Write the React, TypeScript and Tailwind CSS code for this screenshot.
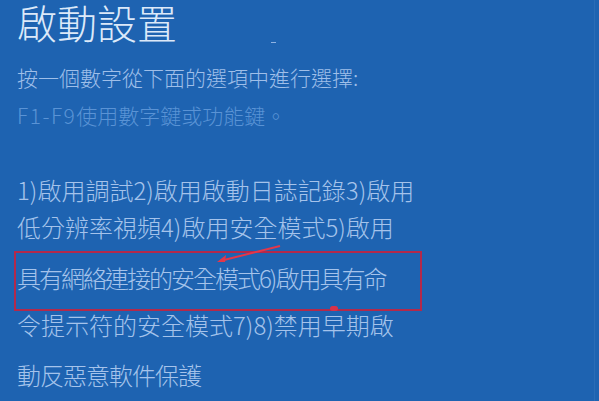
import React from "react";

const font = { fontFamily: '"Noto Sans CJK TC", "Noto Sans", sans-serif' };

const lines = [
  { text: "1)啟用調試2)啟用啟動日誌記錄3)啟用", cls: "h-[37px] tracking-[0px]" },
  { text: "低分辨率視頻4)啟用安全模式5)啟用", cls: "h-[51px] tracking-[0px]" },
  { text: "具有網絡連接的安全模式6)啟用具有命", cls: "h-[47px] tracking-[-2px]" },
  { text: "令提示符的安全模式7)8)禁用早期啟", cls: "h-[50px] tracking-[0px]" },
  { text: "動反惡意軟件保護", cls: "h-[40px] tracking-[-1px]" },
];

export default function App() {
  return (
    <div
      className="relative w-[599px] h-[401px] overflow-hidden bg-[#1e63b1] text-[#a9c6ec]"
      style={font}
    >
      <div className="flex flex-col px-[17px]">
        <div className="h-[44px] text-[40px] leading-[44px] font-light text-[#dce9f9]">
          啟動設置
        </div>
        <div className="mt-[20px] h-[26px] text-[21px] leading-[26px] font-light text-[#9fbfe9]">
          按一個數字從下面的選項中進行選擇:
        </div>
        <div className="mt-[12px] h-[26px] text-[21px] leading-[26px] font-light text-[#5a93d5]">
          <span className="tracking-[1.5px]">F1-F9</span>使用數字鍵或功能鍵。
        </div>
        <div className="mt-[47px] flex flex-col">
          {lines.map((l) => (
            <div
              key={l.text}
              className={`${l.cls} text-[24px] leading-[30px] font-light text-[#a5c3eb]`}
            >
              {l.text}
            </div>
          ))}
        </div>
      </div>

      {/* annotation box */}
      <div className="absolute left-[14px] top-[251px] w-[408px] h-[60px] border-2 border-[#b3294b]" />
      <div className="absolute left-[330px] top-[306px] w-[8px] h-[5px] rounded-full bg-[#d8324a]" />
      <svg
        className="absolute left-[210px] top-[240px]"
        width="80"
        height="30"
        viewBox="0 0 80 30"
      >
        <line x1="70" y1="6" x2="10" y2="21" stroke="#e3374a" strokeWidth="2" />
        <path d="M7 22 L16 15 L15 22 Z" fill="#e3374a" />
      </svg>
      <div className="absolute left-[271px] top-[42px] w-[5px] h-[1px] bg-[#8fb3e3]" />
      <div className="absolute right-[4px] top-0 w-[1px] h-full bg-[#2a6cb6]" />
    </div>
  );
}
